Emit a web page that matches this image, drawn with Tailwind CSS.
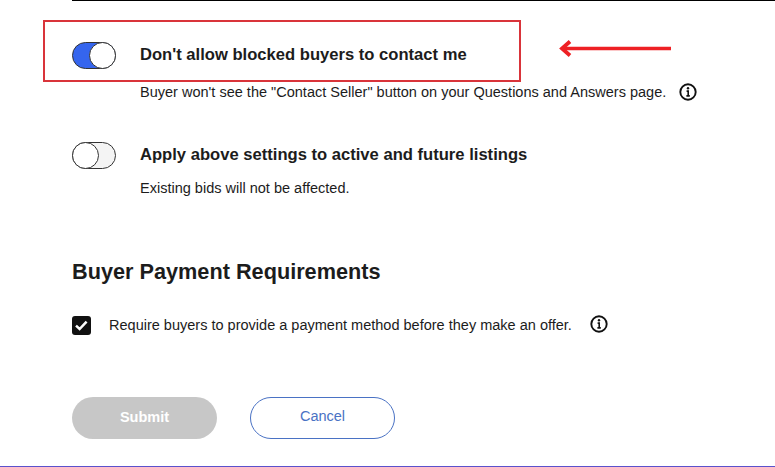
<!DOCTYPE html>
<html>
<head>
<meta charset="utf-8">
<script src="https://cdn.jsdelivr.net/npm/@tailwindcss/browser@4"></script>
</head>
<body class="bg-white">
<div class="relative w-[775px] h-[467px] overflow-hidden bg-white font-['Liberation_Sans',sans-serif] text-[#1c1c1c]">
  <div class="ml-[72px] h-px bg-black"></div>

  <div class="pl-[72px] pt-[41px]">
    <div class="flex items-center h-[27px]">
      <div class="relative w-[44px] h-[27px] rounded-full bg-[#3565ee] border border-[#333]">
        <div class="absolute right-[-1px] top-[-1px] w-[27px] h-[27px] rounded-full bg-white border border-[#333]"></div>
      </div>
      <h3 class="ml-[24px] -mt-[2px] text-[16.6px] font-bold leading-[27px]">Don't allow blocked buyers to contact me</h3>
    </div>
    <div class="flex items-center ml-[68px] mt-[13px] h-[20px]">
      <p class="text-[14.52px] leading-[20px]">Buyer won't see the "Contact Seller" button on your Questions and Answers page.</p>
      <svg class="ml-[13px] w-[18px] h-[18px] -mt-[1px]" viewBox="0 0 18 18" fill="none"><circle cx="9" cy="9" r="7.7" stroke="#111" stroke-width="1.9"/><circle cx="9" cy="5.3" r="1.2" fill="#111"/><path d="M7.6 8.1h1.6v4.5M7.4 12.9h3.4" stroke="#111" stroke-width="1.6"/></svg>
    </div>

    <div class="flex items-center h-[27px] mt-[40px]">
      <div class="relative w-[44px] h-[27px] rounded-full bg-[#f4f4f4] border border-[#333]">
        <div class="absolute left-[-1px] top-[-1px] w-[27px] h-[27px] rounded-full bg-white border border-[#333]"></div>
      </div>
      <h3 class="ml-[24px] -mt-[2px] text-[16.6px] font-bold leading-[27px]">Apply above settings to active and future listings</h3>
    </div>
    <p class="ml-[68px] mt-[9px] text-[14.52px] leading-[20px]">Existing bids will not be affected.</p>

    <h2 class="mt-[60px] text-[21.7px] font-bold leading-[28px]">Buyer Payment Requirements</h2>

    <div class="flex items-center mt-[28px] h-[22px]">
      <div class="flex items-center justify-center w-[19px] h-[19px] rounded-[3px] bg-[#111]">
        <svg class="w-[13px] h-[13px]" viewBox="0 0 13 13" fill="none"><path d="M1 6.6l3.6 3.4 7-7.4" stroke="#fff" stroke-width="2.5"/></svg>
      </div>
      <p class="ml-[18px] text-[14.52px] leading-[20px]">Require buyers to provide a payment method before they make an offer.</p>
      <svg class="ml-[18px] w-[18px] h-[18px] -mt-[2px]" viewBox="0 0 18 18" fill="none"><circle cx="9" cy="9" r="7.7" stroke="#111" stroke-width="1.9"/><circle cx="9" cy="5.3" r="1.2" fill="#111"/><path d="M7.6 8.1h1.6v4.5M7.4 12.9h3.4" stroke="#111" stroke-width="1.6"/></svg>
    </div>

    <div class="flex items-center gap-[33px] mt-[61px]">
      <button class="w-[145px] h-[42px] rounded-full bg-[#c7c7c7] text-white text-[14.52px] font-bold">Submit</button>
      <button class="w-[145px] h-[42px] rounded-full bg-white border-[1.5px] border-[#4a72c4] text-[#4a72c4] text-[14.52px] pb-[3px]">Cancel</button>
    </div>
  </div>

  <div class="absolute left-[43px] top-[20px] w-[478px] h-[62px] border-2 border-[#d9343a]"></div>
  <svg class="absolute left-[556px] top-[38px]" width="116" height="22" viewBox="0 0 116 22" fill="none"><path d="M115 10.5H6" stroke="#ee2024" stroke-width="3.6"/><path d="M14 3.5L6 10.5l8 7" stroke="#ee2024" stroke-width="3.8"/></svg>
  <div class="absolute left-0 right-0 bottom-0 h-px bg-[#5a52cc]"></div>
</div>
</body>
</html>
